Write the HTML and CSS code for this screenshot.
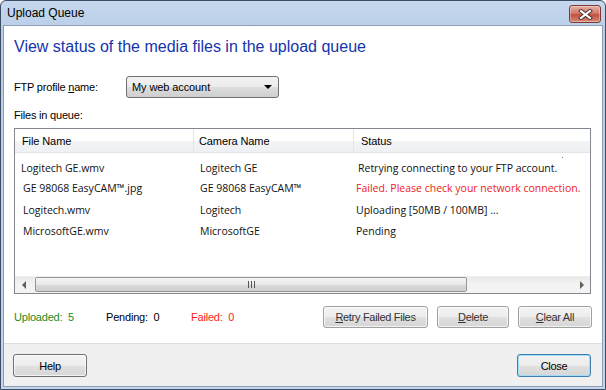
FILE: index.html
```html
<!DOCTYPE html>
<html lang="en">
<head>
    <meta charset="UTF-8">
    <title>Upload Queue</title>
    <link rel="stylesheet" href="styles.css">
</head>
<body>
<div class="window">
    <div class="titlebar">
        <span class="title">Upload Queue</span>
        <span class="close-x">
            <svg width="15" height="11" viewBox="0 0 15 11">
                <path d="M3 2 L12 9 M12 2 L3 9" stroke="#4a2a26" stroke-width="4" stroke-linecap="square"/>
                <path d="M3 2 L12 9 M12 2 L3 9" stroke="#ffffff" stroke-width="2.2" stroke-linecap="square"/>
            </svg>
        </span>
    </div>

    <div class="client">
        <div class="main">
            <h1 class="instruction">View status of the media files in the upload queue</h1>

            <div class="profile-row">
                <span class="label profile-label">FTP profile <u>n</u>ame:</span>
                <div class="combo">
                    <span>My web account</span>
                    <span class="combo-arrow"></span>
                </div>
            </div>

            <div class="label queue-label">Files in queue:</div>

            <div class="list">
                <div class="list-head">
                    <div class="col col-file">File Name</div>
                    <div class="col col-camera">Camera Name</div>
                    <div class="col col-status">Status</div>
                </div>
                <div class="list-body">
                    <div class="row first">
                        <div class="cell col-file">Logitech GE.wmv</div>
                        <div class="cell col-camera">Logitech GE</div>
                        <div class="cell col-status">Retrying connecting to your FTP account.</div>
                    </div>
                    <div class="row second">
                        <div class="cell col-file">GE 98068 EasyCAM™.jpg</div>
                        <div class="cell col-camera">GE 98068 EasyCAM™</div>
                        <div class="cell col-status failed">Failed. Please check your network connection.</div>
                    </div>
                    <div class="row">
                        <div class="cell col-file">Logitech.wmv</div>
                        <div class="cell col-camera">Logitech</div>
                        <div class="cell col-status">Uploading [50MB / 100MB] ...</div>
                    </div>
                    <div class="row">
                        <div class="cell col-file">MicrosoftGE.wmv</div>
                        <div class="cell col-camera">MicrosoftGE</div>
                        <div class="cell col-status">Pending</div>
                    </div>
                    <span class="speck"></span>
                </div>
                <div class="hscroll">
                    <span class="scroll-btn"><span class="tri-left"></span></span>
                    <div class="scroll-track">
                        <div class="thumb"><span class="grip"></span></div>
                    </div>
                    <span class="scroll-btn"><span class="tri-right"></span></span>
                </div>
            </div>

            <div class="actions">
                <div class="counts">
                    <span class="count uploaded">Uploaded:&nbsp; 5</span>
                    <span class="count pending">Pending:&nbsp; 0</span>
                    <span class="count failed-count">Failed:&nbsp; 0</span>
                </div>
                <div class="action-buttons">
                    <button class="btn btn-retry"><u>R</u>etry Failed Files</button>
                    <button class="btn btn-delete"><u>D</u>elete</button>
                    <button class="btn btn-clear"><u>C</u>lear All</button>
                </div>
            </div>
        </div>

        <div class="footer">
            <button class="btn btn-footer">Help</button>
            <button class="btn btn-footer default">Close</button>
        </div>
    </div>
</div>
</body>
</html>
```

FILE: styles.css
```css
* {
    margin: 0;
    padding: 0;
    box-sizing: border-box;
}

body {
    width: 606px;
    height: 390px;
    overflow: hidden;
    background: #ffffff;
    font-family: "Liberation Sans", Arial, sans-serif;
    font-size: 11px;
    color: #000;
}

.window {
    display: flex;
    flex-direction: column;
    width: 606px;
    height: 390px;
    border: 1px solid #3b4c63;
    border-radius: 6px 6px 0 0;
    background: linear-gradient(#c6d8ee, #b9cee8 30px, #c3d6ec);
}

/* title bar */
.titlebar {
    display: flex;
    align-items: center;
    justify-content: space-between;
    height: 24px;
    padding: 0 4px 0 6px;
}

.title {
    font-size: 12px;
    color: #000;
}

.close-x {
    display: flex;
    align-items: center;
    justify-content: center;
    width: 32px;
    height: 18px;
    margin-top: 2px;
    border: 1px solid #7a3a32;
    border-radius: 3px;
    background: linear-gradient(#e6aea4, #d27b6d 45%, #c1503f 55%, #d88a78);
    box-shadow: inset 0 0 0 1px rgba(255, 255, 255, 0.35);
}

/* client area */
.client {
    display: flex;
    flex-direction: column;
    flex: 1;
    margin: 0 2px 2px;
    border: 1px solid #8b9cb3;
    background: #fff;
}

.main {
    flex: 1;
    padding: 11px 11px 0 10px;
}

.instruction {
    height: 20px;
    line-height: 20px;
    font-size: 16px;
    font-weight: normal;
    color: #1434ac;
}

.label {
    font-size: 11px;
    color: #000;
    letter-spacing: -0.2px;
}

.profile-row {
    display: flex;
    align-items: center;
    margin-top: 19px;
}

.profile-label {
    width: 112px;
}

.combo {
    display: flex;
    align-items: center;
    justify-content: space-between;
    width: 153px;
    height: 22px;
    padding: 0 6px 0 5px;
    border: 1px solid #707070;
    border-radius: 3px;
    background: linear-gradient(#f2f2f2, #ebebeb 50%, #dddddd 51%, #cfcfcf);
    font-size: 11px;
    letter-spacing: -0.1px;
}

.combo-arrow {
    width: 0;
    height: 0;
    border-left: 4px solid transparent;
    border-right: 4px solid transparent;
    border-top: 4px solid #000;
}

.queue-label {
    height: 14px;
    line-height: 14px;
    margin-top: 10px;
}

/* list view */
.list {
    display: flex;
    flex-direction: column;
    height: 166px;
    margin-top: 6px;
    border: 1px solid #828790;
}

.list-head {
    display: flex;
    height: 24px;
    border-bottom: 1px solid #e3e5e8;
    background: linear-gradient(#ffffff, #ffffff 50%, #f3f4f6 51%, #eef0f3);
}

.col {
    display: flex;
    align-items: center;
    font-size: 11px;
    letter-spacing: -0.1px;
}

.list-head .col {
    padding-left: 7px;
    border-right: 1px solid #e3e5e8;
}

.list-head .col-camera {
    padding-left: 5px;
}

.list-head .col-status {
    flex: 1;
    border-right: none;
}

.col-file {
    width: 179px;
}

.col-camera {
    width: 160px;
}

.col-status {
    flex: 1;
}

.list-body {
    position: relative;
    flex: 1;
    padding-top: 6px;
}

.row {
    display: flex;
    height: 21px;
    align-items: center;
    font-family: "Open Sans", "Noto Sans", sans-serif;
    font-size: 10.5px;
    color: #111;
    white-space: nowrap;
}

.row .col-file {
    padding-left: 8px;
}

.row .col-camera {
    padding-left: 6px;
}

.row .col-status {
    padding-left: 2px;
}

.row.first {
    height: 18px;
}

.row.second {
    height: 22px;
}

.row.first .col-file {
    padding-left: 6px;
}

.row.first .col-status {
    padding-left: 4px;
}

.failed {
    color: #ee2222;
}

.speck {
    position: absolute;
    top: 4px;
    left: 547px;
    width: 1px;
    height: 1px;
    background: #777;
}

/* horizontal scrollbar */
.hscroll {
    display: flex;
    align-items: stretch;
    height: 17px;
    background: linear-gradient(#e9e9e9, #f2f2f2 40%, #f4f4f4);
    border-top: 1px solid #efefef;
}

.scroll-btn {
    display: flex;
    align-items: center;
    justify-content: center;
    width: 17px;
}

.tri-left {
    border-top: 4px solid transparent;
    border-bottom: 4px solid transparent;
    border-right: 4px solid #606060;
}

.tri-right {
    border-top: 4px solid transparent;
    border-bottom: 4px solid transparent;
    border-left: 4px solid #606060;
}

.scroll-track {
    flex: 1;
    display: flex;
    align-items: stretch;
    padding: 0 0 1px 3px;
}

.thumb {
    display: flex;
    align-items: center;
    justify-content: center;
    width: 432px;
    border: 1px solid #979797;
    border-radius: 2px;
    background: linear-gradient(#f5f5f5, #e8e8e8 50%, #d9d9d9 51%, #cfcfcf);
}

.grip {
    width: 7px;
    height: 7px;
    background: repeating-linear-gradient(90deg, #555 0 1px, transparent 1px 3px);
}

/* counts and actions */
.actions {
    display: flex;
    align-items: center;
    justify-content: space-between;
    margin-top: 12px;
    margin-right: -1px;
}

.counts {
    display: flex;
    font-size: 11px;
    letter-spacing: -0.2px;
}

.count {
    width: 92px;
}

.count.pending {
    width: 85px;
}

.uploaded {
    color: #1b8b24;
}

.failed-count {
    color: #ff1a1a;
}

.action-buttons {
    display: flex;
    gap: 9px;
}

.btn {
    height: 22px;
    border: 1px solid #a0a0a0;
    border-radius: 3px;
    background: linear-gradient(#f4f4f4, #ececec 50%, #e0e0e0 51%, #d6d6d6);
    font-family: "Liberation Sans", Arial, sans-serif;
    font-size: 11px;
    color: #333;
    letter-spacing: -0.3px;
    box-shadow: inset 0 0 0 1px rgba(255, 255, 255, 0.7);
}

.btn-retry {
    width: 105px;
}

.btn-delete {
    width: 72px;
}

.btn-clear {
    width: 74px;
}

/* footer */
.footer {
    display: flex;
    justify-content: space-between;
    align-items: flex-start;
    height: 43px;
    padding: 10px 11px 0 9px;
    border-top: 1px solid #dfdfdf;
    background: #f0f0f0;
}

.btn-footer {
    width: 74px;
    height: 23px;
    border-color: #707070;
    color: #000;
}

.btn-footer.default {
    border-color: #3c7fb1;
    box-shadow: inset 0 0 0 1px #9fdcf8;
}
```
